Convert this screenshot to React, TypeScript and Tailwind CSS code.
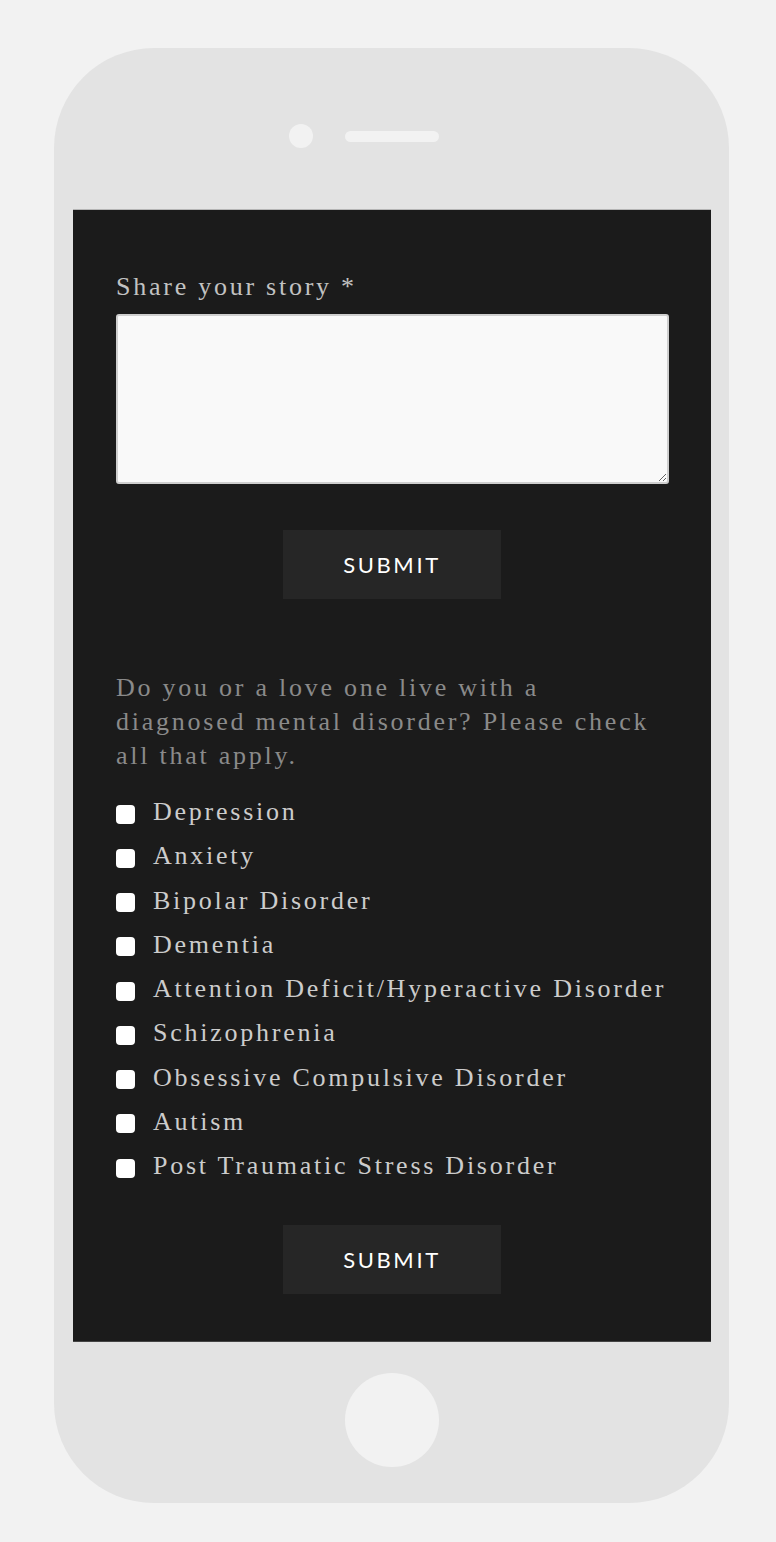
import React from "react";

const options = [
  "Depression",
  "Anxiety",
  "Bipolar Disorder",
  "Dementia",
  "Attention Deficit/Hyperactive Disorder",
  "Schizophrenia",
  "Obsessive Compulsive Disorder",
  "Autism",
  "Post Traumatic Stress Disorder",
];

const serif = { fontFamily: '"Liberation Serif", "Times New Roman", serif' };

const SubmitButton: React.FC = () => (
  <div className="flex justify-center">
    <button className="w-[218px] h-[69px] bg-[#262626] text-white text-[22px] tracking-[2.6px] font-[Lato,sans-serif]">
      SUBMIT
    </button>
  </div>
);

const App: React.FC = () => {
  return (
    <div className="w-[776px] h-[1542px] bg-[#f2f2f2] pt-[48px] pl-[54px]">
      {/* phone body */}
      <div className="w-[675px] h-[1455px] bg-[#e3e3e3] rounded-[100px] flex flex-col">
        {/* top: camera + speaker */}
        <div className="h-[161px] flex items-center justify-center gap-[32px] pr-[56px] pt-[15px]">
          <div className="w-[24px] h-[24px] rounded-full bg-[#f2f2f2]" />
          <div className="w-[94px] h-[11px] rounded-full bg-[#f2f2f2]" />
        </div>

        {/* screen */}
        <div className="ml-[19px] mr-[18px] h-[1133px] bg-[#1b1b1b] border-t border-[#b5b5b5] border-b border-b-[#444] px-[43px] pt-[60px]" style={serif}>
          <label className="block text-[26px] leading-[34px] tracking-[2.75px] text-[#c2c2c2]">
            Share your story *
          </label>
          <textarea className="mt-[10px] block w-[553px] h-[170px] bg-[#f9f9f9] border-2 border-[#cfcfcf] rounded-[3px] resize-y" />

          <div className="mt-[46px]">
            <SubmitButton />
          </div>

          <p className="mt-[72px] text-[26px] leading-[34px] tracking-[2.75px] text-[#8a8a8a]">
            Do you or a love one live with a diagnosed mental disorder? Please check all that apply.
          </p>

          <div className="mt-[17px] flex flex-col">
            {options.map((o) => (
              <label key={o} className="flex items-center gap-[18px] h-[44.25px]">
                <span className="w-[19px] h-[19px] rounded-[4px] bg-white mt-[4px] shrink-0" />
                <span className="text-[26px] tracking-[2.75px] text-[#cccccc] leading-[44px] whitespace-nowrap">{o}</span>
              </label>
            ))}
          </div>

          <div className="mt-[37px]">
            <SubmitButton />
          </div>
        </div>

        {/* bottom: home button */}
        <div className="flex-1 flex items-center justify-center pb-[5px]">
          <div className="w-[94px] h-[94px] rounded-full bg-[#f2f2f2]" />
        </div>
      </div>
    </div>
  );
};

export default App;
